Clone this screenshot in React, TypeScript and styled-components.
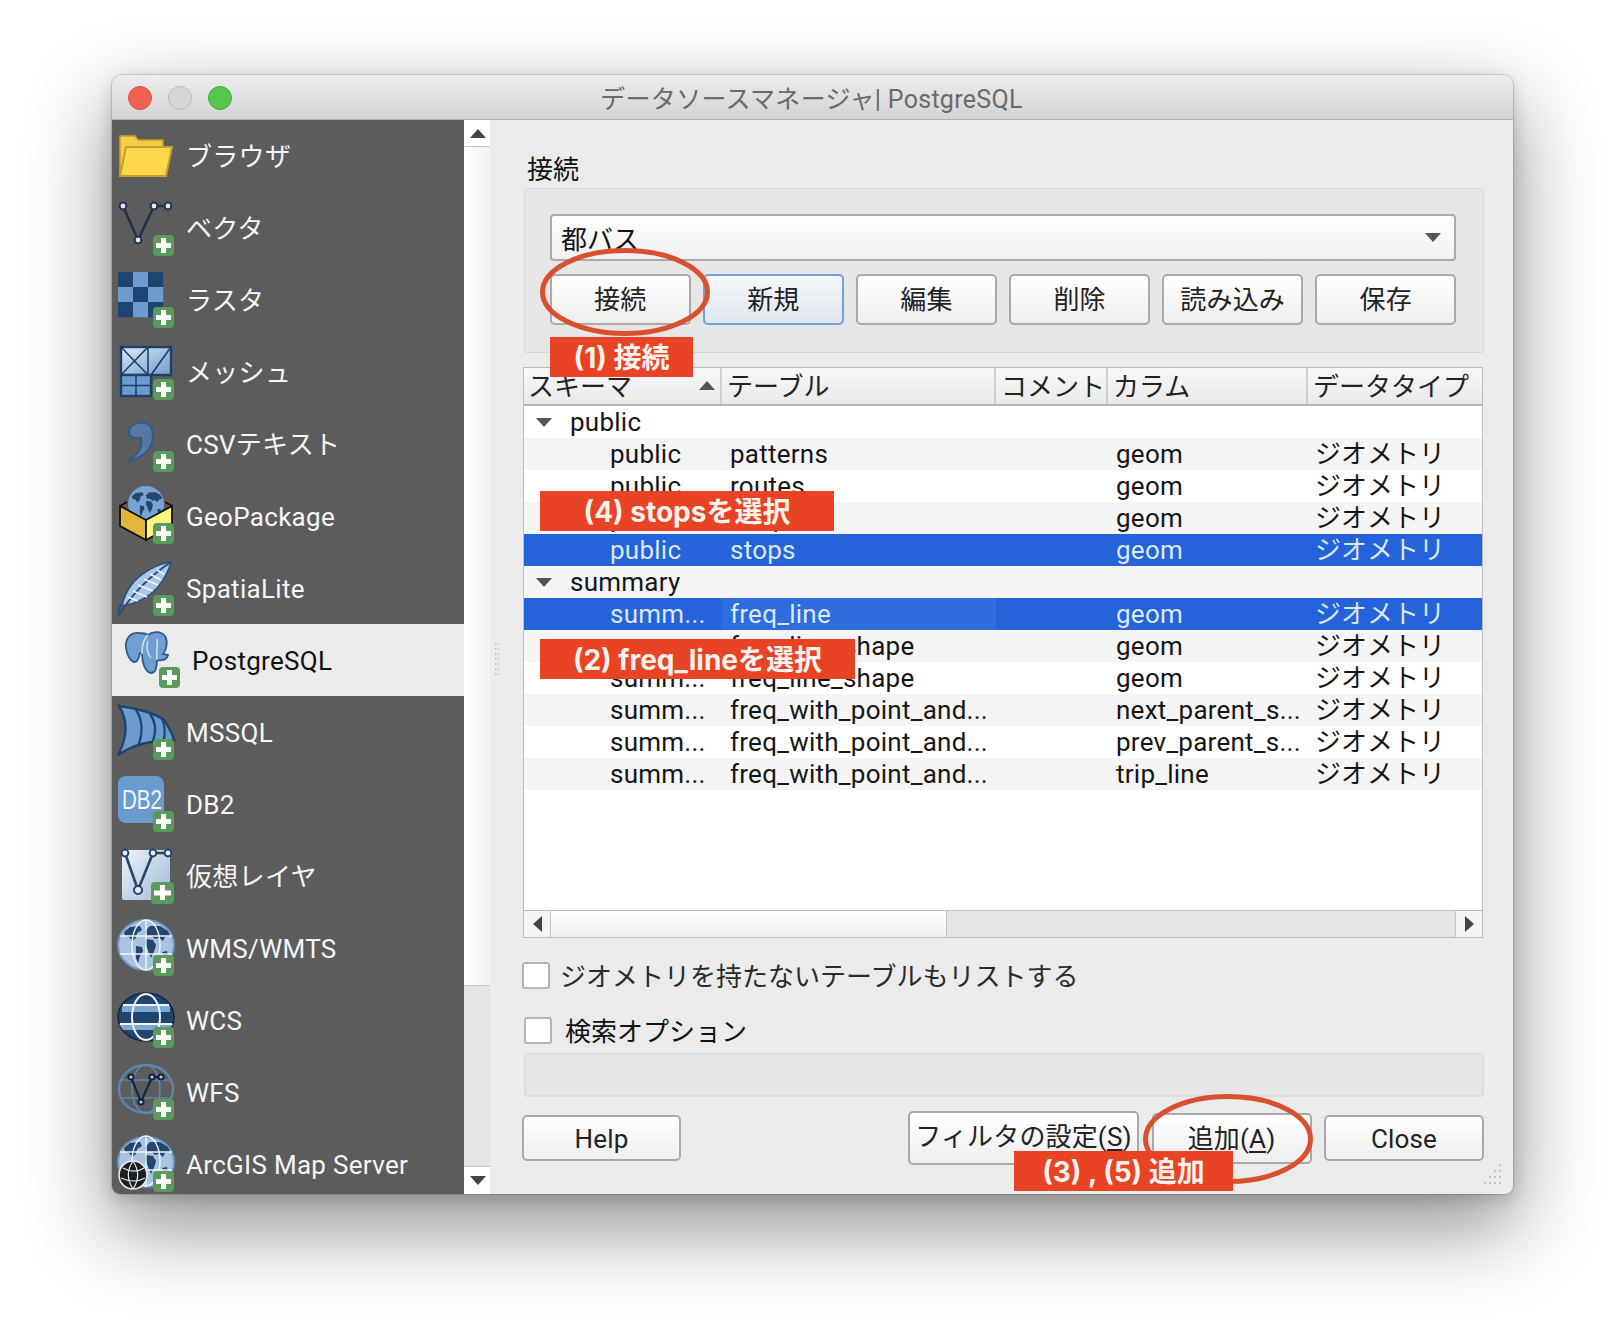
import React from 'react';
import styled, { createGlobalStyle } from 'styled-components';

const Global = createGlobalStyle`
  html, body { margin: 0; padding: 0; background: #fff; }
  * { box-sizing: border-box; }
  body { font-family: Roboto, "Noto Sans CJK JP", sans-serif; font-size: 26px; color: #1c1c1c; }
`;
const Page = styled.div`
  width: 1624px; height: 1342px; padding: 75px 111px 0 112px; background: #fff; overflow: hidden;
`;
const Win = styled.div`
  position: relative; width: 1401px; height: 1119px; display: flex; flex-direction: column;
  border-radius: 10px 10px 8px 8px; background: #ebebeb; overflow: hidden;
  box-shadow: 0 0 0 1px rgba(0,0,0,.13), 0 32px 80px 4px rgba(0,0,0,.42), 0 4px 16px rgba(0,0,0,.16);
`;
const TitleBar = styled.div`
  height: 45px; flex: none; display: flex; align-items: center; position: relative; padding-left: 16px; gap: 16px;
  background: linear-gradient(#ececec, #d4d4d4); border-bottom: 1px solid #b4b4b4;
`;
const Light = styled.span<{ $c: string; $b: string }>`
  width: 24px; height: 24px; border-radius: 50%; background: ${p => p.$c}; border: 1px solid ${p => p.$b}; flex: none; margin-top: 1px;
`;
const Title = styled.div`
  position: absolute; left: 0; right: 0; top: 0; bottom: 0; display: flex; align-items: center; justify-content: center;
  color: #6a6a6a; font-size: 25px; padding-right: 2px; letter-spacing: .3px;
`;
const Body = styled.div`
  flex: 1; display: flex; min-height: 0;
`;
const Sidebar = styled.div`
  width: 352px; flex: none; background: #5c5c5c; overflow: hidden; display: flex; flex-direction: column;
`;
const Item = styled.div<{ $sel?: boolean }>`
  height: 72px; flex: none; display: flex; align-items: center; padding-left: ${p => (p.$sel ? 6 : 0)}px;
  background: ${p => (p.$sel ? '#ebebeb' : 'transparent')}; color: ${p => (p.$sel ? '#111' : '#f6f6f6')};
  svg { flex: none; }
`;
const ItemText = styled.span`
  margin-left: 10px; white-space: nowrap; line-height: 32px; margin-top: 1px; letter-spacing: .3px;
`;
const VScroll = styled.div`
  width: 26px; flex: none; display: flex; flex-direction: column; background: #fff;
`;
const VBtn = styled.div<{ $h: number }>`
  height: ${p => p.$h}px; flex: none; display: flex; align-items: center; justify-content: center; background: #fff; padding-left: 2px;
`;
const VThumb = styled.div`
  height: 839px; flex: none; background: linear-gradient(90deg, #fff, #f2f2f2); border-top: 1px solid #c4c4c4;
`;
const VTrack = styled.div`
  flex: 1; background: #e4e4e4; border-top: 1px solid #c2c2c2; border-bottom: 1px solid #c2c2c2;
`;
const Main = styled.div`
  flex: 1; min-width: 0; padding: 34px 29px 0 32px; display: flex; flex-direction: column; position: relative;
`;
const SectionLabel = styled.div`
  height: 28px; line-height: 28px; margin-left: 5px; color: #111; padding-top: 2px;
`;
const Group = styled.div`
  margin: 6px 0 0 2px; height: 165px; flex: none; padding: 25px 27px 0 25px; background: #e6e6e6;
  border: 1px solid #d6d6d6; border-radius: 3px; display: flex; flex-direction: column; gap: 13px;
`;
const Combo = styled.div`
  height: 47px; flex: none; border: 2px solid #a9a9a9; border-radius: 4px; display: flex; align-items: center;
  justify-content: space-between; padding: 0 13px 0 9px; background: linear-gradient(#fff, #f0f0f0);
  color: #111; span { margin-top: -1px; }
`;
const BtnRow = styled.div`
  display: grid; grid-template-columns: repeat(6, 1fr); column-gap: 12.6px;
`;
const Btn = styled.div<{ $focus?: boolean; $w?: number; $h?: number; $up?: number; $down?: number }>`
  height: ${p => p.$h ?? 51}px; ${p => (p.$w ? `width: ${p.$w}px; flex: none;` : '')}
  border: 2px solid ${p => (p.$focus ? '#6ea3d8' : '#a9a9a9')}; border-radius: 5px; display: flex; align-items: center;
  justify-content: center; white-space: nowrap; padding-bottom: ${p => p.$up ?? 0}px; padding-top: ${p => p.$down ?? 0}px;
  background: ${p => (p.$focus ? 'linear-gradient(#f6f8fb, #dfe6ee)' : 'linear-gradient(#fff, #eeeeee)')};
  color: #222; line-height: 32px; letter-spacing: .15px; u { text-underline-offset: 3px; }
`;
const Table = styled.div`
  margin: 14px 1px 0 1px; height: 571px; flex: none; border: 1px solid #bdbdbd; background: #fff; display: flex; flex-direction: column;
`;
const cols = '198px 274px 112px 200px 1fr';
const Head = styled.div`
  height: 38px; flex: none; display: grid; grid-template-columns: ${cols};
  background: linear-gradient(#f8f8f8, #e9e9e9); border-bottom: 2px solid #b2b2b2;
`;
const HeadCell = styled.div<{ $pad?: number }>`
  position: relative; display: flex; align-items: center; padding-left: ${p => p.$pad ?? 5}px; padding-top: 2px; white-space: nowrap; line-height: 32px;
  border-right: 2px solid #cfcfcf; color: #222; overflow: hidden;
  &:last-child { border-right: 0; }
`;
const SortArrow = styled.svg`
  position: absolute; right: 5px; top: 13px;
`;
const Rows = styled.div`
  flex: 1; min-height: 0; display: flex; flex-direction: column;
`;
const Row = styled.div<{ $kind?: 'alt' | 'sel'; $h?: number }>`
  height: ${p => p.$h ?? 32}px; flex: none; display: grid; grid-template-columns: ${cols}; align-items: stretch;
  background: ${p => (p.$kind === 'sel' ? '#2563da' : p.$kind === 'alt' ? '#f5f5f5' : '#fff')};
  color: ${p => (p.$kind === 'sel' ? '#dbe8ff' : '#161616')};
`;
const Cell = styled.div<{ $pad: number; $cur?: boolean; $cjk?: boolean }>`
  padding-left: ${p => p.$pad}px; white-space: nowrap; line-height: 32px; overflow: hidden;
  letter-spacing: ${p => (p.$cjk ? 0 : 0.25)}px;
  ${p => (p.$cur ? 'background: #2e6ddd;' : '')}
`;
const GroupRow = styled.div<{ $kind?: 'alt'; $h?: number }>`
  height: ${p => p.$h ?? 32}px; flex: none; display: flex; align-items: center; gap: 0; padding-left: 12px;
  background: ${p => (p.$kind ? '#f5f5f5' : '#fff')}; color: #161616;
`;
const GroupName = styled.span`
  margin-left: 18px; margin-top: -1px; letter-spacing: .25px;
`;
const HScroll = styled.div`
  height: 27px; margin-top: auto; flex: none; display: flex; border-top: 1px solid #bdbdbd; background: #e4e4e4;
`;
const HBtn = styled.div<{ $side: 'l' | 'r' }>`
  width: 27px; flex: none; background: #f4f4f4; display: flex; align-items: center; justify-content: center;
  ${p => (p.$side === 'l' ? 'border-right: 1px solid #c4c4c4;' : 'border-left: 1px solid #c4c4c4; margin-left: auto;')}
`;
const HThumb = styled.div`
  width: 396px; flex: none; background: linear-gradient(#fff, #f0f0f0); border-right: 1px solid #c0c0c0;
`;
const CheckRow = styled.div<{ $mt: number; $ml: number; $gap: number }>`
  margin: ${p => p.$mt}px 0 0 ${p => p.$ml}px; height: 27px; flex: none; display: flex; align-items: center; gap: ${p => p.$gap}px;
  white-space: nowrap;
`;
const Box = styled.span`
  width: 28px; height: 27px; flex: none; background: #fff; border: 2px solid #b4b4b4; border-radius: 3px;
`;
const CheckText = styled.span<{ $dark?: boolean }>`
  color: ${p => (p.$dark ? '#111' : '#2a2a2a')}; margin-top: -2px;
`;
const SearchBox = styled.div`
  margin: 9px 0 0 2px; height: 44px; flex: none; background: #e6e6e6; border: 2px solid #dcdcdc; border-radius: 3px;
`;
const Bottom = styled.div`
  margin-top: 14px; height: 54px; flex: none; display: flex; align-items: center; gap: 12.5px;
`;
const Spacer = styled.div`
  flex: 1;
`;
const Note = styled.div<{ $x: number; $y: number; $w: number }>`
  position: absolute; left: ${p => p.$x - 112}px; top: ${p => p.$y - 75}px; width: ${p => p.$w}px; height: 40px;
  background: #e84324; color: #fdf3ee; font-family: Inter, "Noto Sans CJK JP", sans-serif; font-weight: 700; font-size: 28px;
  display: flex; align-items: center; justify-content: center; white-space: nowrap; z-index: 3; line-height: 36px; padding-top: 1px;
`;
const Ring = styled.svg<{ $x: number; $y: number }>`
  position: absolute; left: ${p => p.$x - 112}px; top: ${p => p.$y - 75}px; z-index: 2; overflow: visible; pointer-events: none;
`;
const Grip = styled.svg`
  position: absolute; right: 8px; bottom: 8px; 
`;
const Splitter = styled.svg`
  position: absolute; left: 5px; top: 523px;
`;

const Plus = ({ x = 41, big = false }: { x?: number; big?: boolean }) => (
  <g>
    <rect x={x} y={big ? 42 : 43} width={big ? 23 : 21} height={big ? 22 : 21} rx="4" fill="#5b9a5c" />
    <rect x={x + (big ? 9 : 8)} y={big ? 45 : 46} width="5" height="15" fill="#fff" />
    <rect x={x + 3} y={big ? 50.5 : 51} width={big ? 17 : 15} height="5" fill="#fff" />
  </g>
);
const Svg = ({ children }: { children: React.ReactNode }) => (
  <svg width="64" height="72" viewBox="0 0 64 72">{children}</svg>
);
const Node = ({ x, y, s = '#1f3350', f = '#e6ecf5', r = 3.4 }: { x: number; y: number; s?: string; f?: string; r?: number }) => (
  <circle cx={x} cy={y} r={r} fill={f} stroke={s} strokeWidth="2" />
);
const Lands = ({ c = '#23476f' }: { c?: string }) => (
  <g fill={c}>
    <path d="M12 20 L18 15 L28 14 L30 18 L25 21 L24 26 L20 29 L17 25 L13 24 Z" />
    <path d="M24 34 L30 35 L31 39 L28 44 L26 51 L24 46 Z" />
    <path d="M33 19 L38 14 L48 14 L56 19 L58 24 L53 25 L51 29 L47 26 L43 27 L40 24 L35 24 Z" />
    <path d="M34 27 L41 28 L44 33 L42 40 L39 46 L37 41 L35 36 L33 32 Z" />
    <path d="M50 40 L55 39 L56 43 L52 45 Z" />
  </g>
);
const GlobeLines = ({ c = '#f1f5fa' }: { c?: string }) => (
  <g fill="none" stroke={c} strokeWidth="1.4">
    <ellipse cx="34" cy="33" rx="14" ry="25" />
    <path d="M34 8 V58 M8 24 H60 M8 42 H60" />
  </g>
);

const icons: Record<string, React.ReactNode> = {
  folder: (
    <Svg>
      <path d="M8 56 V16 H23 L26 20 H51 V27 H14 Z" fill="#f4cc45" stroke="#c3a02f" strokeWidth="1.5" />
      <path d="M14 27 H60 L54 56 H8 Z" fill="#ffd84c" stroke="#c3a02f" strokeWidth="2" />
    </Svg>
  ),
  vector: (
    <Svg>
      <path d="M11 14 L26 48 L42 14 H56" fill="none" stroke="#1f3350" strokeWidth="2.6" />
      <Node x={11} y={14} /><Node x={26} y={48} /><Node x={42} y={14} /><Node x={56} y={14} />
      <Plus />
    </Svg>
  ),
  raster: (
    <Svg>
      {[0, 1, 2].flatMap(r => [0, 1, 2].map(c => (
        <rect key={`${r}${c}`} x={6 + c * 15} y={8 + r * 15} width="15.2" height="15.2" fill={(r + c) % 2 ? '#6c9bcd' : '#1f446f'} />
      )))}
      <Plus />
    </Svg>
  ),
  mesh: (
    <Svg>
      <defs>
        <linearGradient id="mg" x1="0" y1="0" x2="1" y2="1"><stop offset="0" stopColor="#dfe9f4" /><stop offset="1" stopColor="#6f9ccb" /></linearGradient>
      </defs>
      <rect x="9" y="11" width="50" height="28" fill="url(#mg)" stroke="#1f3f68" strokeWidth="2.4" />
      <path d="M36 11 V39 M9 11 L36 39 M36 11 L9 39 M39 39 L59 11" stroke="#1f3f68" strokeWidth="1.6" fill="none" />
      <rect x="9" y="39" width="30" height="21" fill="#6c9bcd" stroke="#1f3f68" strokeWidth="2.4" />
      <path d="M24 39 V60 M9 49.5 H39" stroke="#1f3f68" strokeWidth="1.6" fill="none" />
      <Plus />
    </Svg>
  ),
  csv: (
    <Svg>
      <path d="M33 15 C 24 13 17 18 17 24 C 17 29 22 31 29 30 C 31 38 27 46 16 53 C 30 50 41 42 41 28 C 41 21 38 16 33 15 Z" fill="#54789f" stroke="#2d5b90" strokeWidth="2" />
      <Plus />
    </Svg>
  ),
  gpkg: (
    <Svg>
      <circle cx="34" cy="24" r="18" fill="#7ba3d1" />
      <g transform="translate(12 3) scale(.66)"><Lands /></g>
      <path d="M8 26 L34 40 V60 L8 46 Z" fill="#e2b53c" stroke="#111" strokeWidth="1.8" />
      <path d="M60 26 L34 40 V60 L60 46 Z" fill="#fbf77e" stroke="#111" strokeWidth="1.8" />
      <path d="M8 26 L15 22 M60 26 L53 22" stroke="#111" strokeWidth="1.8" />
      <Plus />
    </Svg>
  ),
  feather: (
    <Svg>
      <path d="M59 10 C 45 12 30 20 20 32 C 14 40 11 48 10 54 C 22 52 36 46 45 36 C 52 28 57 18 59 10 Z" fill="#a9c7e6" stroke="#27527f" strokeWidth="1.6" />
      <path d="M59 10 C 38 24 20 42 7 63 C 6 60 7 56 9 52" fill="none" stroke="#27527f" strokeWidth="2" />
      <path d="M45 18 L52 22 M38 22 L49 28 M32 27 L46 33 M26 33 L41 39 M21 39 L35 45 M16 45 L26 49" stroke="#f3f7fb" strokeWidth="1.6" />
      <Plus />
    </Svg>
  ),
  pg: (
    <Svg>
      <path d="M21 9 C 12 8 7 15 8 24 C 9 32 13 38 17 38 C 20 38 21 33 22 29 L 24 30 C 24 38 27 48 33 49 C 38 49 39 42 39 36 C 45 37 49 35 50 31 L 45 30 C 49 25 50 17 47 12 C 43 7 35 7 30 11 C 27 9 24 9 21 9 Z" fill="#6f9fd2" stroke="#2e5b90" strokeWidth="1.8" />
      <path d="M30 11 C 26 14 24 20 24 30 M30 17 C 28 22 29 30 33 34 M39 36 C 38 28 40 20 39 15" fill="none" stroke="#c9dcf0" strokeWidth="1.6" />
      <Plus />
    </Svg>
  ),
  mssql: (
    <Svg>
      <path d="M7 10 C 26 12 44 18 52 24 C 56 30 60 36 62 44 C 44 44 22 48 6 59 C 14 44 17 26 7 10 Z" fill="#6c9bcd" stroke="#1f446f" strokeWidth="2.4" />
      <path d="M24 14 C 31 24 31 38 26 50 M38 18 C 44 26 44 36 41 45 M50 23 C 53 29 53 37 52 44" fill="none" stroke="#1f446f" strokeWidth="2.2" />
      <Plus />
    </Svg>
  ),
  db2: (
    <Svg>
      <rect x="6" y="8" width="46" height="47" rx="8" fill="#6a9bcf" />
      <text x="10" y="41" fontFamily="Liberation Sans, sans-serif" fontSize="27" fill="#f0f6fc" textLength="40" lengthAdjust="spacingAndGlyphs">DB2</text>
      <Plus />
    </Svg>
  ),
  virt: (
    <Svg>
      <defs>
        <linearGradient id="vg" x1="0" y1="0" x2="1" y2="1"><stop offset="0" stopColor="#eef2f8" /><stop offset="1" stopColor="#9fbad8" /></linearGradient>
      </defs>
      <rect x="10" y="10" width="48" height="50" rx="2" fill="url(#vg)" />
      <path d="M13 13 L26 50 L41 13 H56" fill="none" stroke="#25466d" strokeWidth="2.6" />
      <Node x={13} y={13} s="#25466d" /><Node x={26} y={50} s="#25466d" r={4} /><Node x={41} y={13} s="#25466d" /><Node x={56} y={13} s="#25466d" />
      <Plus x={39} big />
    </Svg>
  ),
  wms: (
    <Svg>
      <ellipse cx="34" cy="33" rx="28" ry="25" fill="#a9c4e2" stroke="#6f98c5" strokeWidth="2" />
      <Lands />
      <GlobeLines />
      <Plus />
    </Svg>
  ),
  wcs: (
    <Svg>
      <ellipse cx="34" cy="33" rx="28" ry="24" fill="#1f446f" stroke="#14263f" strokeWidth="1.5" />
      <path d="M10 22 H58 V28 H10 Z M7 40 H61 L57 46 H11 Z" fill="#7ea6d3" />
      <ellipse cx="34" cy="33" rx="14" ry="23" fill="none" stroke="#f1f5fa" strokeWidth="2" />
      <path d="M11 21 H57 M8 40 H60" stroke="#f1f5fa" strokeWidth="2" />
      <Plus />
    </Svg>
  ),
  wfs: (
    <Svg>
      <ellipse cx="34" cy="33" rx="27" ry="24" fill="none" stroke="#5f84ad" strokeWidth="2.4" />
      <ellipse cx="34" cy="33" rx="14" ry="24" fill="none" stroke="#5f84ad" strokeWidth="1.6" />
      <path d="M8 24 H60 M8 42 H60" stroke="#5f84ad" strokeWidth="1.6" />
      <path d="M19 21 L29 46 L40 21 H49" fill="none" stroke="#14263f" strokeWidth="2.2" />
      <Node x={19} y={21} s="#14263f" f="#b8c6d8" r={2.6} /><Node x={29} y={46} s="#14263f" f="#b8c6d8" r={2.6} /><Node x={40} y={21} s="#14263f" f="#b8c6d8" r={2.6} /><Node x={49} y={21} s="#14263f" f="#b8c6d8" r={2.6} />
      <Plus />
    </Svg>
  ),
  arc: (
    <Svg>
      <ellipse cx="34" cy="34" rx="28" ry="25" fill="#a9c4e2" stroke="#6f98c5" strokeWidth="2" />
      <Lands />
      <GlobeLines />
      <circle cx="21" cy="47" r="14" fill="#1c1f24" stroke="#e8e8e8" strokeWidth="1.6" />
      <path d="M11 40 C 18 44 26 44 32 40 M9 50 C 18 54 26 54 33 50 M21 33 C 15 42 15 52 21 61 M21 33 C 27 42 27 52 21 61" fill="none" stroke="#e8e8e8" strokeWidth="1.2" />
      <Plus />
    </Svg>
  ),
};

const items: [string, string][] = [
  ['folder', 'ブラウザ'], ['vector', 'ベクタ'], ['raster', 'ラスタ'], ['mesh', 'メッシュ'], ['csv', 'CSVテキスト'],
  ['gpkg', 'GeoPackage'], ['feather', 'SpatiaLite'], ['pg', 'PostgreSQL'], ['mssql', 'MSSQL'], ['db2', 'DB2'],
  ['virt', '仮想レイヤ'], ['wms', 'WMS/WMTS'], ['wcs', 'WCS'], ['wfs', 'WFS'], ['arc', 'ArcGIS Map Server'],
];

type R = { kind?: 'alt' | 'sel'; a: string; b: string; c: string; cur?: boolean };
const publicRows: R[] = [
  { kind: 'alt', a: 'public', b: 'patterns', c: 'geom' },
  { a: 'public', b: 'routes', c: 'geom' },
  { kind: 'alt', a: 'public', b: 'shapes', c: 'geom' },
  { kind: 'sel', a: 'public', b: 'stops', c: 'geom' },
];
const summaryRows: R[] = [
  { kind: 'sel', a: 'summ...', b: 'freq_line', c: 'geom', cur: true },
  { kind: 'alt', a: 'summ...', b: 'freq_line_shape', c: 'geom' },
  { a: 'summ...', b: 'freq_line_shape', c: 'geom' },
  { kind: 'alt', a: 'summ...', b: 'freq_with_point_and...', c: 'next_parent_s...' },
  { a: 'summ...', b: 'freq_with_point_and...', c: 'prev_parent_s...' },
  { kind: 'alt', a: 'summ...', b: 'freq_with_point_and...', c: 'trip_line' },
];
const DataRow = ({ r }: { r: R }) => (
  <Row $kind={r.kind}>
    <Cell $pad={86}>{r.a}</Cell>
    <Cell $pad={8} $cur={r.cur}>{r.b}</Cell>
    <Cell $pad={0} />
    <Cell $pad={8}>{r.c}</Cell>
    <Cell $pad={7} $cjk>ジオメトリ</Cell>
  </Row>
);
const Tri = ({ d, c = '#555', w = 16, h = 9 }: { d: 'u' | 'd' | 'l' | 'r'; c?: string; w?: number; h?: number }) => {
  const pts = { u: `0,${h} ${w},${h} ${w / 2},0`, d: `0,0 ${w},0 ${w / 2},${h}`, l: `${w},0 ${w},${h} 0,${h / 2}`, r: `0,0 0,${h} ${w},${h / 2}` }[d];
  return <svg width={w} height={h} viewBox={`0 0 ${w} ${h}`}><polygon points={pts} fill={c} /></svg>;
};

export default function App() {
  return (
    <Page>
      <Global />
      <Win>
        <TitleBar>
          <Light $c="#f2604f" $b="#d9503f" />
          <Light $c="#d6d6d6" $b="#bcbcbc" />
          <Light $c="#54c74b" $b="#42a83b" />
          <Title>データソースマネージャ| PostgreSQL</Title>
        </TitleBar>
        <Body>
          <Sidebar>
            {items.map(([k, t]) => (
              <Item key={k} $sel={k === 'pg'}>
                {icons[k]}
                <ItemText>{t}</ItemText>
              </Item>
            ))}
          </Sidebar>
          <VScroll>
            <VBtn $h={26}><Tri d="u" c="#444" /></VBtn>
            <VThumb />
            <VTrack />
            <VBtn $h={27}><Tri d="d" c="#444" /></VBtn>
          </VScroll>
          <Main>
            <Splitter width="4" height="34" viewBox="0 0 4 34">
              {[0, 1, 2, 3, 4, 5, 6].flatMap(i => [0, 3].map(x => <rect key={`${i}-${x}`} x={x} y={i * 5} width="1.4" height="2" fill="#c2c2c2" />))}
            </Splitter>
            <SectionLabel>接続</SectionLabel>
            <Group>
              <Combo>
                <span>都バス</span>
                <Tri d="d" />
              </Combo>
              <BtnRow>
                <Btn>接続</Btn>
                <Btn $focus>新規</Btn>
                <Btn>編集</Btn>
                <Btn>削除</Btn>
                <Btn>読み込み</Btn>
                <Btn>保存</Btn>
              </BtnRow>
            </Group>
            <Table>
              <Head>
                <HeadCell $pad={4}>スキーマ<SortArrow width="16" height="9" viewBox="0 0 16 9"><polygon points="0,9 16,9 8,0" fill="#555" /></SortArrow></HeadCell>
                <HeadCell>テーブル</HeadCell>
                <HeadCell>コメント</HeadCell>
                <HeadCell>カラム</HeadCell>
                <HeadCell>データタイプ</HeadCell>
              </Head>
              <Rows>
                <GroupRow $h={32}><Tri d="d" /><GroupName>public</GroupName></GroupRow>
                {publicRows.map((r, i) => <DataRow key={i} r={r} />)}
                <GroupRow $kind="alt"><Tri d="d" /><GroupName>summary</GroupName></GroupRow>
                {summaryRows.map((r, i) => <DataRow key={i} r={r} />)}
                <HScroll>
                  <HBtn $side="l"><Tri d="l" c="#444" w={9} h={16} /></HBtn>
                  <HThumb />
                  <HBtn $side="r"><Tri d="r" c="#444" w={9} h={16} /></HBtn>
                </HScroll>
              </Rows>
            </Table>
            <CheckRow $mt={24} $ml={0} $gap={10}>
              <Box /><CheckText>ジオメトリを持たないテーブルもリストする</CheckText>
            </CheckRow>
            <CheckRow $mt={28} $ml={2} $gap={13}>
              <Box /><CheckText $dark>検索オプション</CheckText>
            </CheckRow>
            <SearchBox />
            <Bottom>
              <Btn $w={159} $h={46} $down={2}>Help</Btn>
              <Spacer />
              <Btn $w={231} $h={54} $up={2}><span>フィルタの設定(<u>S</u>)</span></Btn>
              <Btn $w={160} $h={51} $down={2}><span>追加(<u>A</u>)</span></Btn>
              <Btn $w={160} $h={46} $down={2}>Close</Btn>
            </Bottom>
          </Main>
        </Body>
        <Ring $x={540} $y={248} width="170" height="88" viewBox="0 0 170 88">
          <ellipse cx="85" cy="44" rx="82.5" ry="41.5" fill="none" stroke="#d9502f" strokeWidth="5" />
        </Ring>
        <Ring $x={1143} $y={1094} width="170" height="90" viewBox="0 0 170 90">
          <ellipse cx="85" cy="45" rx="82.5" ry="42.5" fill="none" stroke="#d9502f" strokeWidth="5" />
        </Ring>
        <Note $x={550} $y={337} $w={143}>(1) 接続</Note>
        <Note $x={540} $y={491} $w={294}>(4) stopsを選択</Note>
        <Note $x={540} $y={639} $w={315}>(2) freq_lineを選択</Note>
        <Note $x={1014} $y={1151} $w={219}>(3) , (5) 追加</Note>
        <Grip width="22" height="22" viewBox="0 0 22 22">
          {[[16, 0], [16, 6], [11, 6], [16, 12], [11, 12], [6, 12], [16, 18], [11, 18], [6, 18], [1, 18]].map(([x, y], i) => (
            <rect key={i} x={x} y={y} width="2" height="2" fill="#c4c4c4" />
          ))}
        </Grip>
      </Win>
    </Page>
  );
}
